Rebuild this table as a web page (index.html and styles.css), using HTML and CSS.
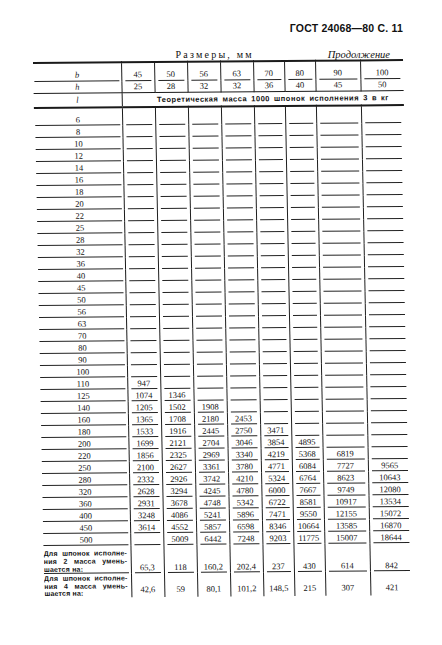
FILE: index.html
```html
<!DOCTYPE html>
<html lang="ru">
<head>
<meta charset="utf-8">
<title>ГОСТ 24068—80 С. 11</title>
<link rel="stylesheet" href="styles.css">
</head>
<body>
<div class="page">
  <div class="doc-head">ГОСТ 24068—80 С. 11</div>
  <div class="caption"><span class="dims">Размеры, мм</span><span class="cont">Продолжение</span></div>
  <table class="t">
    <colgroup><col class="c-l"><col class="c33"><col class="c33"><col class="c33"><col class="c33"><col class="c31"><col class="c31"><col class="c45"><col class="c43"></colgroup>
    <tr class="r-b"><td class="lbl"><em>b</em></td><td>45</td><td>50</td><td>56</td><td>63</td><td>70</td><td>80</td><td>90</td><td>100</td></tr>
    <tr class="r-h"><td class="lbl"><em>h</em></td><td>25</td><td>28</td><td>32</td><td>32</td><td>36</td><td>40</td><td>45</td><td>50</td></tr>
    <tr class="r-l"><td class="lbl"><em>l</em></td><td colspan="8" class="mass">Теоретическая масса 1000 шпонок исполнения 3 в кг</td></tr>
    <tr class="first"><td class="lbl">6</td><td></td><td></td><td></td><td></td><td></td><td></td><td></td><td></td></tr>
    <tr><td class="lbl">8</td><td></td><td></td><td></td><td></td><td></td><td></td><td></td><td></td></tr>
    <tr><td class="lbl">10</td><td></td><td></td><td></td><td></td><td></td><td></td><td></td><td></td></tr>
    <tr><td class="lbl">12</td><td></td><td></td><td></td><td></td><td></td><td></td><td></td><td></td></tr>
    <tr><td class="lbl">14</td><td></td><td></td><td></td><td></td><td></td><td></td><td></td><td></td></tr>
    <tr><td class="lbl">16</td><td></td><td></td><td></td><td></td><td></td><td></td><td></td><td></td></tr>
    <tr><td class="lbl">18</td><td></td><td></td><td></td><td></td><td></td><td></td><td></td><td></td></tr>
    <tr><td class="lbl">20</td><td></td><td></td><td></td><td></td><td></td><td></td><td></td><td></td></tr>
    <tr><td class="lbl">22</td><td></td><td></td><td></td><td></td><td></td><td></td><td></td><td></td></tr>
    <tr><td class="lbl">25</td><td></td><td></td><td></td><td></td><td></td><td></td><td></td><td></td></tr>
    <tr><td class="lbl">28</td><td></td><td></td><td></td><td></td><td></td><td></td><td></td><td></td></tr>
    <tr><td class="lbl">32</td><td></td><td></td><td></td><td></td><td></td><td></td><td></td><td></td></tr>
    <tr><td class="lbl">36</td><td></td><td></td><td></td><td></td><td></td><td></td><td></td><td></td></tr>
    <tr><td class="lbl">40</td><td></td><td></td><td></td><td></td><td></td><td></td><td></td><td></td></tr>
    <tr><td class="lbl">45</td><td></td><td></td><td></td><td></td><td></td><td></td><td></td><td></td></tr>
    <tr><td class="lbl">50</td><td></td><td></td><td></td><td></td><td></td><td></td><td></td><td></td></tr>
    <tr><td class="lbl">56</td><td></td><td></td><td></td><td></td><td></td><td></td><td></td><td></td></tr>
    <tr><td class="lbl">63</td><td></td><td></td><td></td><td></td><td></td><td></td><td></td><td></td></tr>
    <tr><td class="lbl">70</td><td></td><td></td><td></td><td></td><td></td><td></td><td></td><td></td></tr>
    <tr><td class="lbl">80</td><td></td><td></td><td></td><td></td><td></td><td></td><td></td><td></td></tr>
    <tr><td class="lbl">90</td><td></td><td></td><td></td><td></td><td></td><td></td><td></td><td></td></tr>
    <tr><td class="lbl">100</td><td></td><td></td><td></td><td></td><td></td><td></td><td></td><td></td></tr>
    <tr><td class="lbl">110</td><td>947</td><td></td><td></td><td></td><td></td><td></td><td></td><td></td></tr>
    <tr><td class="lbl">125</td><td>1074</td><td>1346</td><td></td><td></td><td></td><td></td><td></td><td></td></tr>
    <tr><td class="lbl">140</td><td>1205</td><td>1502</td><td>1908</td><td></td><td></td><td></td><td></td><td></td></tr>
    <tr><td class="lbl">160</td><td>1365</td><td>1708</td><td>2180</td><td>2453</td><td></td><td></td><td></td><td></td></tr>
    <tr><td class="lbl">180</td><td>1533</td><td>1916</td><td>2445</td><td>2750</td><td>3471</td><td></td><td></td><td></td></tr>
    <tr><td class="lbl">200</td><td>1699</td><td>2121</td><td>2704</td><td>3046</td><td>3854</td><td>4895</td><td></td><td></td></tr>
    <tr><td class="lbl">220</td><td>1856</td><td>2325</td><td>2969</td><td>3340</td><td>4219</td><td>5368</td><td>6819</td><td></td></tr>
    <tr><td class="lbl">250</td><td>2100</td><td>2627</td><td>3361</td><td>3780</td><td>4771</td><td>6084</td><td>7727</td><td>9565</td></tr>
    <tr><td class="lbl">280</td><td>2332</td><td>2926</td><td>3742</td><td>4210</td><td>5324</td><td>6764</td><td>8623</td><td>10643</td></tr>
    <tr><td class="lbl">320</td><td>2628</td><td>3294</td><td>4245</td><td>4780</td><td>6000</td><td>7667</td><td>9749</td><td>12080</td></tr>
    <tr><td class="lbl">360</td><td>2931</td><td>3678</td><td>4748</td><td>5342</td><td>6722</td><td>8581</td><td>10917</td><td>13534</td></tr>
    <tr><td class="lbl">400</td><td>3248</td><td>4086</td><td>5241</td><td>5896</td><td>7471</td><td>9550</td><td>12155</td><td>15072</td></tr>
    <tr><td class="lbl">450</td><td>3614</td><td>4552</td><td>5857</td><td>6598</td><td>8346</td><td>10664</td><td>13585</td><td>16870</td></tr>
    <tr><td class="lbl">500</td><td></td><td>5009</td><td>6442</td><td>7248</td><td>9203</td><td>11775</td><td>15007</td><td>18644</td></tr>
    <tr class="r-v2"><td class="lbl note"><span class="j">Для шпонок исполне-</span><span class="j">ния 2 масса умень-</span><span>шается на:</span></td><td>65,3</td><td>118</td><td>160,2</td><td>202,4</td><td>237</td><td>430</td><td>614</td><td>842</td></tr>
    <tr class="r-v4"><td class="lbl note"><span class="j">Для шпонок исполне-</span><span class="j">ния 4 масса умень-</span><span>шается на:</span></td><td>42,6</td><td>59</td><td>80,1</td><td>101,2</td><td>148,5</td><td>215</td><td>307</td><td>421</td></tr>
  </table>
</div>
</body>
</html>
```

FILE: styles.css
```css
html, body {
  margin: 0;
  padding: 0;
  background: #fff;
}

.page {
  width: 442px;
  height: 645px;
  padding: 0 0 0 33px;
  box-sizing: border-box;
  color: #111;
  font-family: "Liberation Serif", "DejaVu Serif", serif;
  overflow: hidden;
}

.doc-head {
  width: 370px;
  padding-top: 22px;
  text-align: right;
  font-family: "Liberation Sans", Arial, sans-serif;
  font-weight: bold;
  font-size: 10.5px;
  line-height: 12px;
  letter-spacing: 0.2px;
}

.caption {
  width: 370px;
  margin-top: 12px;
  height: 16px;
  display: flex;
  align-items: center;
  justify-content: flex-end;
}

.dims {
  font-size: 10px;
  letter-spacing: 2.2px;
  margin-right: 74px;
}

.cont {
  font-style: italic;
  font-size: 10.5px;
  margin-right: 13px;
}

.t {
  width: 370px;
  table-layout: fixed;
  border-collapse: collapse;
  border-top: 2px solid #1a1a1a;
  transform-origin: 0 0;
  transform: matrix(1, -0.008, 0.0195, 1, 0, 0);
  font-size: 8.5px;
}

.c-l { width: 88px; }
.c33 { width: 33px; }
.c31 { width: 31px; }
.c45 { width: 45px; }
.c43 { width: 43px; }

.t td {
  height: 12px;
  padding: 0;
  line-height: 11px;
  vertical-align: bottom;
  text-align: center;
  white-space: nowrap;
  border-right: 1px solid #1f1f1f;
  background-image: linear-gradient(#222, #222);
  background-repeat: no-repeat;
  background-size: calc(100% - 6px) 1px;
  background-position: 3px 100%;
}

.t td:last-child {
  border-right: none;
}

.t td.lbl {
  border-right: 1.5px solid #1a1a1a;
  background-size: calc(100% - 3px) 1px;
  background-position: 1px 100%;
}

.t em {
  font-style: italic;
}

.t tr.first td {
  height: 17px;
}

.t tr.r-b td {
  height: 17px;
  padding-bottom: 1px;
  line-height: 12px;
}

.t tr.r-h td {
  height: 11px;
  line-height: 11px;
  vertical-align: middle;
  border-bottom: 1px solid #1a1a1a;
  background-image: none;
}

.t tr.r-l td {
  height: 13px;
  vertical-align: middle;
  border-bottom: 2px solid #1a1a1a;
  background-image: none;
}

.t td.mass {
  font-family: "Liberation Sans", Arial, sans-serif;
  font-weight: bold;
  font-size: 7.5px;
  letter-spacing: 0.5px;
  word-spacing: 1.5px;
  padding-left: 20px;
}

.t tr.r-v2 td {
  height: 28px;
}

.t tr.r-v4 td {
  height: 22px;
  padding-bottom: 2px;
  background-image: none;
}

.t td.note {
  text-align: left;
  font-family: "Liberation Sans", Arial, sans-serif;
  font-weight: bold;
  font-size: 7px;
  line-height: 8px;
  letter-spacing: 0.2px;
  padding-left: 1px;
  padding-right: 3px;
}

.t tr.r-v4 td.note {
  padding-bottom: 0;
  line-height: 7.6px;
}

.note span {
  display: block;
  white-space: nowrap;
  overflow: hidden;
}

.note .j {
  text-align: justify;
  text-align-last: justify;
}
```
